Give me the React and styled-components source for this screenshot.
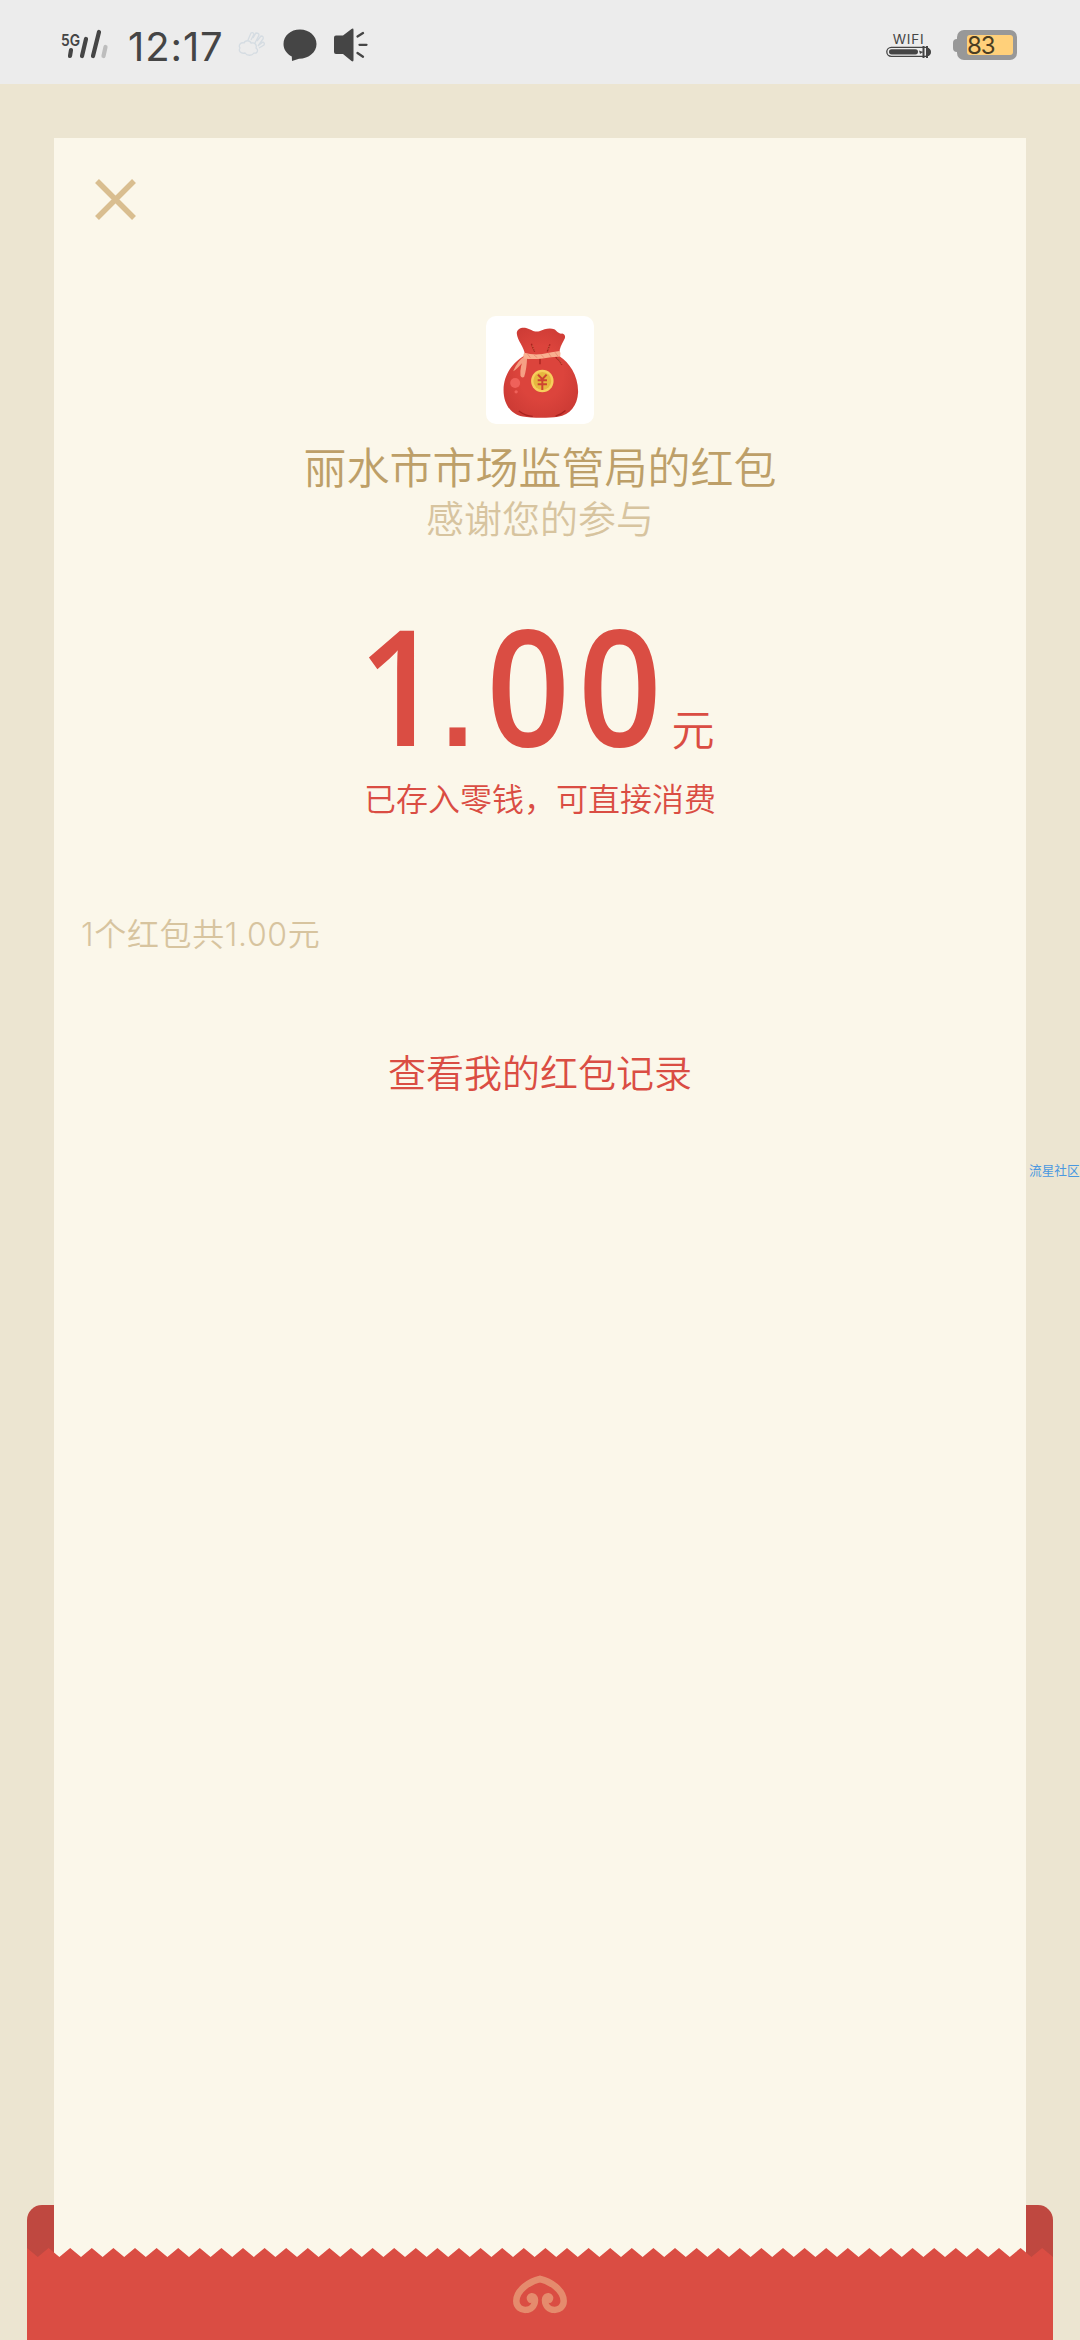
import React from "react";
import styled, { createGlobalStyle } from "styled-components";

const GlobalStyle = createGlobalStyle`
  * {
    box-sizing: border-box;
  }
  body {
    margin: 0;
    background: #ece5d1;
    font-family: "Noto Sans CJK SC", "Noto Sans", sans-serif;
    font-weight: 350;
  }
`;

const Screen = styled.div`
  display: flex;
  flex-direction: column;
  width: 1080px;
  height: 2340px;
  overflow: hidden;
  background: #ece5d1;
`;

const StatusBar = styled.header`
  display: flex;
  align-items: center;
  justify-content: space-between;
  height: 84px;
  padding: 6px 63px 0 61px;
  background: #ececec;
  color: #454545;
  font-family: "Inter", sans-serif;
`;

const StatusGroup = styled.div`
  display: flex;
  align-items: center;
  gap: ${({ $gap }) => $gap || 0}px;
`;

const Time = styled.span`
  width: 97px;
  margin: 3px 13px 0 18px;
  font-size: 40px;
  font-weight: 400;
  line-height: 48px;
  letter-spacing: 0.9px;
  white-space: nowrap;
`;

const Wifi = styled.div`
  display: flex;
  flex-direction: column;
  align-items: center;
  width: 45px;
`;

const WifiLabel = styled.span`
  font-size: 13.5px;
  font-weight: 400;
  line-height: 14px;
  letter-spacing: 0.8px;
`;

const Battery = styled.div`
  display: flex;
  align-items: center;
`;

const BatteryTip = styled.div`
  width: 4px;
  height: 13px;
  border-radius: 4px 0 0 4px;
  background: #989898;
`;

const BatteryBody = styled.div`
  width: 60px;
  height: 30px;
  padding: 5px 4px 5px 10px;
  border-radius: 7px;
  background: #989898;
`;

const BatteryLevel = styled.div`
  height: 20px;
  border-radius: 3px;
  background: #ffd07a;
  color: #4a3d22;
  font-size: 24px;
  font-weight: 400;
  line-height: 21px;
  letter-spacing: -1px;
`;

/* Envelope back, paper and envelope front share grid cells so they stack. */
const Envelope = styled.main`
  flex: 1;
  display: grid;
  grid-template-columns: 27px 27px 1fr 27px 27px;
  grid-template-rows: 54px 1fr 43px 9px 83px;
`;

const EnvelopeBack = styled.div`
  grid-area: 3 / 2 / 6 / 5;
  border-radius: 15px 15px 0 0;
  background: #bf4840;
`;

const Paper = styled.section`
  grid-area: 2 / 3 / 5 / 4;
  display: flex;
  flex-direction: column;
  align-items: center;
  background: #fbf7ea;
`;

const EnvelopeFront = styled.footer`
  grid-area: 4 / 2 / 6 / 5;
  display: flex;
  justify-content: center;
  padding-top: 27px;
  background: #da4d43;
  clip-path: polygon(${({ $edge }) => $edge});
`;

const CloseButton = styled.button`
  align-self: flex-start;
  display: flex;
  margin: 41px 0 0 41px;
  padding: 0;
  border: 0;
  background: none;
`;

const Avatar = styled.div`
  width: 108px;
  height: 108px;
  margin-top: 96px;
  border-radius: 10px;
  background: #fff;
`;

const Sender = styled.h1`
  margin: 15px 0 0;
  color: #bd9f68;
  font-size: 43px;
  font-weight: 350;
  line-height: 52px;
`;

const Greeting = styled.p`
  margin: 0;
  color: #d7c49f;
  font-size: 38px;
  line-height: 52px;
`;

const Amount = styled.div`
  display: flex;
  align-items: baseline;
  height: 160px;
  margin-top: 61px;
  padding-right: 8px;
  color: #da4d43;
  line-height: 160px;
`;

const AmountValue = styled.span`
  display: inline-block;
  margin-right: -29px;
  font-family: "Open Sans", sans-serif;
  font-size: 161px;
  font-weight: 650;
  letter-spacing: 9px;
  transform: scaleX(0.91);
  transform-origin: left;
`;

const Point = styled.span`
  margin: 0 14px 0 -9px;
  font-family: "Liberation Sans", sans-serif;
  font-size: 125px;
  font-weight: 700;
  line-height: 1;
  letter-spacing: 0;
`;

const Unit = styled.span`
  font-size: 43px;
`;

const Note = styled.p`
  margin: 9px 0 0;
  color: #da4d43;
  font-size: 32px;
  line-height: 48px;
`;

const Summary = styled.p`
  align-self: flex-start;
  margin: 90px 0 0 27px;
  color: #d7c49f;
  font-family: "Inter", "Noto Sans CJK SC", sans-serif;
  font-size: 32px;
  line-height: 48px;
  letter-spacing: 0.65px;
`;

const RecordsLink = styled.a`
  margin-top: 84px;
  color: #da4d43;
  font-size: 38px;
  line-height: 56px;
`;

const SideMark = styled.span`
  position: absolute;
  top: 1161px;
  left: 1029px;
  color: #4a98e0;
  font-size: 12.7px;
  font-weight: 400;
  line-height: 18px;
  white-space: nowrap;
`;

const SignalIcon = () => (
  <svg width="49" height="32" viewBox="0 0 49 32">
    <text x="0" y="16.5" fontSize="16" fontWeight="600" textLength="19" lengthAdjust="spacingAndGlyphs" fill="#454545">
      5G
    </text>
    <g fill="none" strokeWidth="4.2" strokeLinecap="round" stroke="#454545">
      <path d="M10 21l-1 6M25 10l-4 17M38 3l-6 24" />
      <path d="M44.5 18l-2 9" stroke="#bdbdbd" />
    </g>
  </svg>
);

const WeatherIcon = () => (
  <svg width="28" height="26" viewBox="0 0 28 26" fill="none" stroke="#d5dce2" strokeWidth="1.3">
    <path d="M7 21c-4 1-7-2-5-5-2-3 1-6 4-5 1-3 6-3 7 0 4-1 6 2 5 5 3 2 1 6-2 5-2 3-7 3-9 0z" />
    <path d="M10 8l3-7q2-1 3 1l-3 6M15 6l3-5q3 0 3 2l-4 8M19 9l4-5q3 0 2 3l-5 7M21 13l4-3q2 1 1 3l-5 3" />
  </svg>
);

const BubbleIcon = () => (
  <svg width="34" height="33" viewBox="0 0 34 33" fill="#454545">
    <path d="M17 0.5C7.5 0.5 0.5 6.8 0.5 15c0 5.4 3.3 10 8.3 12.5L9 32l7-2.3C26 29.7 33.5 23 33.5 15S26.5 0.5 17 0.5z" />
  </svg>
);

const SpeakerIcon = () => (
  <svg width="34" height="34" viewBox="0 0 34 34">
    <path d="M2 7.5h7L17.5 1q2-1.3 2 1v30q0 2.3-2 1L9 26H2q-2 0-2-2V9.5q0-2 2-2z" fill="#454545" />
    <path d="M23.5 8.5l5.5-3.5M25.5 16.8h7M23.5 25l5.5 3.7" stroke="#454545" strokeWidth="2.3" strokeLinecap="round" />
  </svg>
);

const PencilIcon = () => (
  <svg width="45" height="12" viewBox="0 0 45 12">
    <rect x="0.8" y="1.3" width="43" height="9" rx="4.5" fill="none" stroke="#454545" strokeWidth="1.3" />
    <rect x="3" y="3.2" width="29" height="5.2" rx="2.6" fill="#454545" />
    <path d="M33 4.5l4 1.5-3 2zM36.5 0h2v12h-2zM40 0h2v12h-2zM42 2q3 1 3 4t-3 4z" fill="#454545" />
  </svg>
);

const CloseIcon = () => (
  <svg width="41" height="41" viewBox="0 0 41 41" stroke="#d9be90" strokeWidth="5.5">
    <path d="M2 2l37 37M39 2L2 39" />
  </svg>
);

const LuckyBag = () => (
  <svg width="108" height="108" viewBox="46 48 326 326">
    <defs>
      <radialGradient id="bag" cx="0.5" cy="0.5" r="0.6">
        <stop offset="0.5" stopColor="#dc443c" />
        <stop offset="1" stopColor="#cb3a34" />
      </radialGradient>
    </defs>
    <path
      d="M139 101C138 88 152 81 167 84C181 87 190 98 207 94C222 87 238 83 252 88C260 92 264 103 276 101C286 104 287 113 281 121C272 137 265 151 269 170C296 188 325 226 324 278C322 318 300 346 263 352C235 356 184 356 157 351C121 345 99 314 99 271C99 226 126 188 163 167C165 147 140 122 139 101Z"
      fill="url(#bag)"
    />
    <path d="M183 132q5 14 10 24M239 133l-8 22M209 176v18M256 172q12 9 19 23M145 335q20 15 42 16M286 333q-14 13-30 17" fill="none" stroke="#a8231f" strokeWidth="4" />
    <path d="M186 137q3 10 7 17M237 138l-5 14M262 176q8 8 12 17" fill="none" stroke="#f2b66f" strokeWidth="1.5" strokeDasharray="4 4" />
    <path d="M164 169q-22 13-36 46q14-8 38-38zM163 171q-16 30-13 57q3 8 11 4q8-24 9-58z" fill="#f6a084" />
    <path d="M162 159q25 8 54 4q30-6 52-9q6 7 2 16q-28 2-53 6q-29 4-56 0q-5-9 1-17z" fill="#f9b090" />
    <path d="M171 162l9 12M190 165l11 9M212 164l9 10M235 160l8 12M254 157l9 12" stroke="#e8886f" strokeWidth="2.5" />
    <circle cx="134" cy="250" r="15" fill="#ef615a" />
    <circle cx="137" cy="277" r="5" fill="#ef615a" />
    <circle cx="216" cy="244" r="34" fill="#f7cf5d" />
    <circle cx="216" cy="244" r="27" fill="#e6b73f" />
    <path d="M203 225l13 14 13-14M216 239v32M202 242h28M202 254h28" fill="none" stroke="#ce4330" strokeWidth="6" />
  </svg>
);

const CloudMark = () => (
  <svg width="54" height="39" viewBox="0 0 54 39" fill="none" stroke="#e58b6d" strokeWidth="6.5" strokeLinecap="round">
    <path d="M27 4C17 6 3.3 15 3.3 26C3.3 38 22 38 22 25C21.5 19 15 21 17.5 24.5" />
    <path d="M27 4C37 6 50.7 15 50.7 26C50.7 38 32 38 32 25C32.5 19 39 21 36.5 24.5" />
  </svg>
);

// saw-tooth top edge: 47.5 teeth across the 1026px envelope
const TOOTH = 21.6;
const edgePoints = Array.from(
  { length: 96 },
  (_, i) => `${((i * TOOTH) / 2).toFixed(1)}px ${i % 2 ? 9 : 0}px`
);
const edge = [...edgePoints, "100% 100%", "0 100%"].join(", ");

const App = () => {
  return (
    <Screen>
      <GlobalStyle />
      <StatusBar>
        <StatusGroup>
          <SignalIcon />
          <Time>12:17</Time>
          <StatusGroup $gap={17}>
            <WeatherIcon />
            <BubbleIcon />
            <SpeakerIcon />
          </StatusGroup>
        </StatusGroup>
        <StatusGroup $gap={22}>
          <Wifi>
            <WifiLabel>WIFI</WifiLabel>
            <PencilIcon />
          </Wifi>
          <Battery>
            <BatteryTip />
            <BatteryBody>
              <BatteryLevel>83</BatteryLevel>
            </BatteryBody>
          </Battery>
        </StatusGroup>
      </StatusBar>

      <Envelope>
        <EnvelopeBack />
        <Paper>
          <CloseButton aria-label="关闭">
            <CloseIcon />
          </CloseButton>
          <Avatar>
            <LuckyBag />
          </Avatar>
          <Sender>丽水市市场监管局的红包</Sender>
          <Greeting>感谢您的参与</Greeting>
          <Amount>
            <AmountValue>
              1<Point>.</Point>00
            </AmountValue>
            <Unit>元</Unit>
          </Amount>
          <Note>已存入零钱，可直接消费</Note>
          <Summary>1个红包共1.00元</Summary>
          <RecordsLink>查看我的红包记录</RecordsLink>
        </Paper>
        <EnvelopeFront $edge={edge}>
          <CloudMark />
        </EnvelopeFront>
      </Envelope>
      <SideMark>流星社区</SideMark>
    </Screen>
  );
};

export default App;
